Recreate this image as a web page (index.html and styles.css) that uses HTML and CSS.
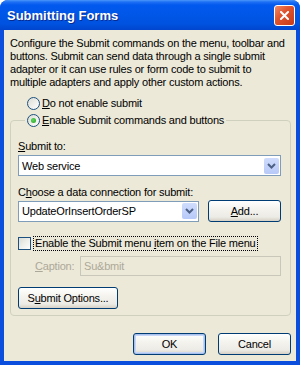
FILE: index.html
```html
<!DOCTYPE html>
<html lang="en">
<head>
  <meta charset="UTF-8" />
  <title>Submitting Forms</title>
  <link rel="stylesheet" href="styles.css">
</head>
<body>

  <div class="window">
    <div class="titlebar">
      <span class="title">Submitting Forms</span>
      <span class="close">
        <svg width="9" height="9" viewBox="0 0 9 9">
          <path d="M1 1 L8 8 M8 1 L1 8" stroke="#fff" stroke-width="2" stroke-linecap="square"/>
        </svg>
      </span>
    </div>

    <div class="client">
      <p class="intro">Configure the Submit commands on the menu, toolbar and<br>buttons. Submit can send data through a single submit<br>adapter or it can use rules or form code to submit to<br>multiple adapters and apply other custom actions.</p>

      <div class="radio-row">
        <span class="radio"></span>
        <span><u>D</u>o not enable submit</span>
      </div>

      <fieldset class="group">
        <legend class="radio-row">
          <span class="radio checked"></span>
          <span><u>E</u>nable Submit commands and buttons</span>
        </legend>

        <div class="field-label first"><u>S</u>ubmit to:</div>
        <div class="combo">
          <span class="combo-text">Web service</span>
          <span class="combo-btn">
            <svg width="15" height="16" viewBox="0 0 15 16">
              <path d="M4 6 L7.5 9.5 L11 6" fill="none" stroke="#4d6185" stroke-width="2"/>
            </svg>
          </span>
        </div>

        <div class="field-label">C<u>h</u>oose a data connection for submit:</div>
        <div class="conn-row">
          <div class="combo short">
            <span class="combo-text">UpdateOrInsertOrderSP</span>
            <span class="combo-btn">
              <svg width="15" height="16" viewBox="0 0 15 16">
                <path d="M4 6 L7.5 9.5 L11 6" fill="none" stroke="#4d6185" stroke-width="2"/>
              </svg>
            </span>
          </div>
          <button class="btn add"><u>A</u>dd...</button>
        </div>

        <div class="check-row">
          <span class="checkbox"></span>
          <span class="focus">Enable the Submit menu <u>i</u>tem on the File menu</span>
        </div>

        <div class="caption-row">
          <span class="caption-label"><u>C</u>aption:</span>
          <span class="textbox">Su&amp;bmit</span>
        </div>

        <button class="btn options">S<u>u</u>bmit Options...</button>
      </fieldset>

      <div class="footer">
        <button class="btn default">OK</button>
        <button class="btn">Cancel</button>
      </div>
    </div>
  </div>

</body>
</html>
```

FILE: styles.css
```css
body {
  margin: 0;
  font-family: 'Liberation Sans', Arial, sans-serif;
  font-size: 11px;
  letter-spacing: -0.2px;
  color: #000;
  background: #fff;
}

.window {
  width: 300px;
  height: 365px;
  display: flex;
  flex-direction: column;
  background: #0b4ddc;
  border-radius: 8px 8px 0 0;
  overflow: hidden;
}

.titlebar {
  height: 30px;
  flex-shrink: 0;
  display: flex;
  align-items: center;
  justify-content: space-between;
  padding: 0 5px 0 7px;
  background: linear-gradient(#4b97fb 0, #1d6ff3 2px, #0259ee 5px, #0056e6 16px, #0052df 24px, #0045cd 30px);
}

.title {
  color: #fff;
  font-weight: bold;
  font-size: 13px;
  letter-spacing: 0;
  text-shadow: 1px 1px 0 #0a2a8c;
  margin-top: 1px;
}

.close {
  width: 19px;
  height: 19px;
  display: flex;
  align-items: center;
  justify-content: center;
  border: 1px solid #fff;
  border-radius: 3px;
  background: linear-gradient(135deg, #f08a66, #e0552f 40%, #c73a18);
}

.client {
  flex: 1;
  margin: 0 4px 4px;
  background: #ece9d8;
  padding: 7px 5px 0 6px;
}

.intro {
  margin: 0;
  line-height: 13px;
  white-space: nowrap;
}

u {
  text-decoration: underline;
}

.radio-row {
  display: flex;
  align-items: center;
  gap: 2px;
  height: 13px;
  line-height: 13px;
  margin: 8px 0 0 17px;
}

.radio {
  width: 11px;
  height: 11px;
  border: 1px solid #1c5180;
  border-radius: 50%;
  background: linear-gradient(135deg, #dcdcd5, #fff);
  display: flex;
  align-items: center;
  justify-content: center;
}

.radio.checked::after {
  content: "";
  width: 5px;
  height: 5px;
  border-radius: 50%;
  background: radial-gradient(circle at 40% 40%, #5ed65e, #21a121);
}

.group {
  margin: 4px 0 0;
  padding: 0 9px 6px 7px;
  border: 1px solid #d0d0bf;
  border-radius: 4px;
  width: 263px;
}

.group legend.radio-row {
  margin: 0 0 0 7px;
  padding: 0 2px;
}

.field-label {
  line-height: 13px;
  margin-top: 10px;
}

.field-label.first {
  margin-top: 13px;
}

.combo {
  height: 19px;
  margin-top: 2px;
  border: 1px solid #7f9db9;
  background: #fff;
  display: flex;
  align-items: center;
  justify-content: space-between;
  padding: 0 1px 0 3px;
}

.combo-btn {
  width: 15px;
  height: 16px;
  border-radius: 2px;
  background: linear-gradient(#cfdcfd, #b7c9f8);
  display: flex;
}

.conn-row {
  display: flex;
  align-items: center;
  justify-content: space-between;
  margin-top: 1px;
}

.conn-row .combo {
  width: 175px;
  margin-top: 0;
}

.btn {
  font-family: inherit;
  font-size: 11px;
  letter-spacing: -0.2px;
  color: #000;
  height: 22px;
  padding: 0;
  border: 1px solid #003c74;
  border-radius: 3px;
  background: linear-gradient(#fff, #f4f3ee 40%, #ecebe5 80%, #d6d0c5);
}

.btn.add {
  width: 73px;
}

.check-row {
  display: flex;
  align-items: center;
  gap: 2px;
  margin-top: 14px;
  height: 15px;
}

.checkbox {
  width: 11px;
  height: 11px;
  border: 1px solid #1c5180;
  background: linear-gradient(135deg, #dcdcd5, #fff);
}

.focus {
  border: 1px dotted #000;
  padding: 0 1px;
  line-height: 13px;
}

.caption-row {
  display: flex;
  align-items: center;
  margin: 5px 0 0 17px;
}

.caption-label {
  width: 45px;
  color: #aca899;
}

.textbox {
  flex: 1;
  height: 18px;
  line-height: 18px;
  border: 1px solid #c9c7ba;
  padding-left: 3px;
  color: #aca899;
}

.btn.options {
  display: block;
  width: 100px;
  margin-top: 11px;
}

.footer {
  display: flex;
  justify-content: flex-end;
  gap: 12px;
  margin-top: 17px;
}

.footer .btn {
  width: 73px;
}

.btn.default {
  box-shadow: inset 0 0 0 1px #a7c0ec, inset 0 0 0 2px #c5d6f6;
}
```
